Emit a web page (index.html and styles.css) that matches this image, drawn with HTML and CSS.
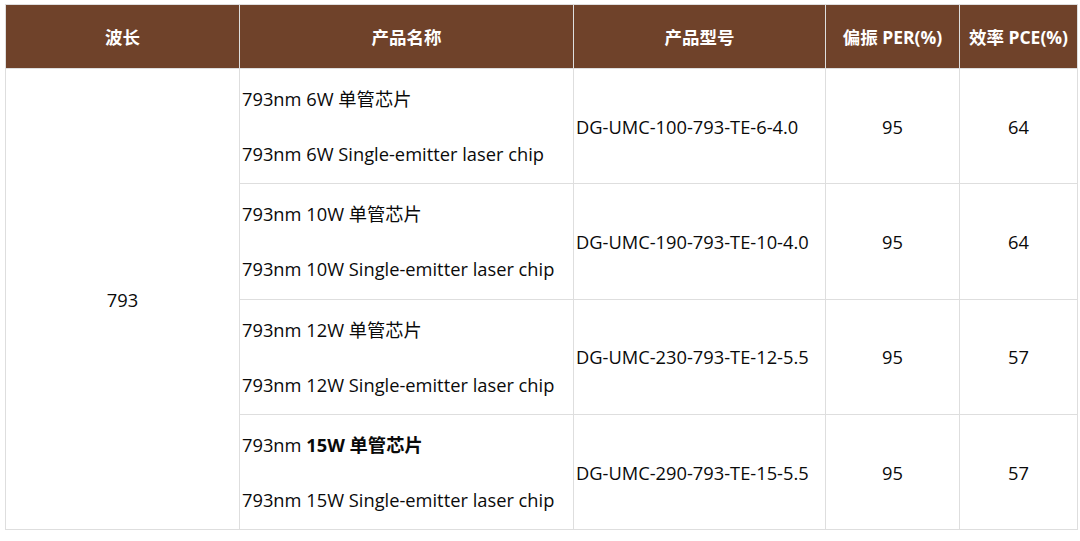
FILE: index.html
```html
<!DOCTYPE html>
<html lang="zh">
<head>
<meta charset="utf-8">
<link rel="stylesheet" href="styles.css">
</head>
<body>
<div class="wrap">
<table class="spec">
  <colgroup>
    <col class="c1"><col class="c2"><col class="c3"><col class="c4"><col class="c5">
  </colgroup>
  <thead>
    <tr>
      <th>波长</th>
      <th>产品名称</th>
      <th>产品型号</th>
      <th>偏振 PER(%)</th>
      <th>效率 PCE(%)</th>
    </tr>
  </thead>
  <tbody>
    <tr>
      <td class="center" rowspan="4">793</td>
      <td class="name"><p>793nm 6W 单管芯片</p><p>793nm 6W Single-emitter laser chip</p></td>
      <td class="model">DG-UMC-100-793-TE-6-4.0</td>
      <td class="center">95</td>
      <td class="center">64</td>
    </tr>
    <tr>
      <td class="name"><p>793nm 10W 单管芯片</p><p>793nm 10W Single-emitter laser chip</p></td>
      <td class="model">DG-UMC-190-793-TE-10-4.0</td>
      <td class="center">95</td>
      <td class="center">64</td>
    </tr>
    <tr>
      <td class="name"><p>793nm 12W 单管芯片</p><p>793nm 12W Single-emitter laser chip</p></td>
      <td class="model">DG-UMC-230-793-TE-12-5.5</td>
      <td class="center">95</td>
      <td class="center">57</td>
    </tr>
    <tr>
      <td class="name"><p>793nm <b>15W 单管芯片</b></p><p>793nm 15W Single-emitter laser chip</p></td>
      <td class="model">DG-UMC-290-793-TE-15-5.5</td>
      <td class="center">95</td>
      <td class="center">57</td>
    </tr>
  </tbody>
</table>
</div>
</body>
</html>
```
FILE: styles.css
```css
html, body {
  margin: 0;
  padding: 0;
  background: #ffffff;
}
.wrap {
  padding: 4px 3px 0 5px;
}
.spec {
  border-collapse: collapse;
  table-layout: fixed;
  width: 1072px;
  font-family: "Open Sans", "Noto Sans CJK SC", sans-serif;
  font-size: 18.3px;
  color: #0a0a0a;
}
.c1 { width: 234px; }
.c2 { width: 334px; }
.c3 { width: 252px; }
.c4 { width: 134px; }
.c5 { width: 118px; }
.spec th, .spec td {
  border: 1px solid #dedede;
  padding: 0 2px;
}
.spec th {
  background: #6f422a;
  color: #ffffff;
  font-weight: 700;
  font-size: 17.5px;
  height: 63px;
  text-align: center;
  vertical-align: middle;
  padding: 0;
}
.spec td {
  height: 114.3px;
  vertical-align: middle;
}
.center { text-align: center; }
.name p {
  margin: 0;
  line-height: 25px;
}
.name p + p {
  margin-top: 30px;
}
.name b { font-weight: 700; }
```
